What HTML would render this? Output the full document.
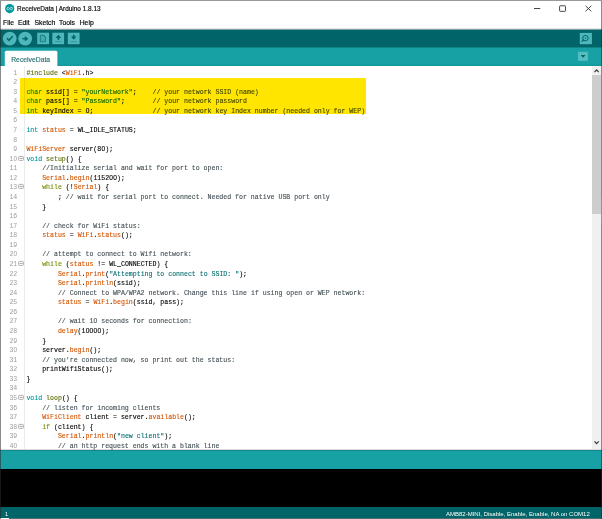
<!DOCTYPE html>
<html><head><meta charset="utf-8">
<style>
*{margin:0;padding:0;box-sizing:border-box}
html,body{width:602px;height:519px;overflow:hidden;background:#fff}
body{position:relative;font-family:"Liberation Sans",sans-serif}
.a{position:absolute}
#title{left:17px;top:5px;font-size:6.45px;color:#000;white-space:nowrap;-webkit-text-stroke:0.15px #000}
.menu{top:19.3px;font-size:6.8px;color:#000;white-space:nowrap;-webkit-text-stroke:0.15px #000}
#tabt{left:11.2px;top:56.1px;font-size:6.8px;color:#2a7072;white-space:nowrap;-webkit-text-stroke:0.15px #2a7072}
.l{left:0;width:592px;height:9.556px;font-family:"Liberation Mono",monospace;font-size:6.57px;line-height:9.556px;color:#000;white-space:pre}
.ln{position:absolute;left:0.3px;top:0;width:17px;text-align:right;color:#9c9c9c}
.cd{position:absolute;left:26.4px;top:0;-webkit-text-stroke:0.12px currentColor}
s{text-decoration:none;font-family:"Liberation Sans",sans-serif;display:inline-block;width:3.954px;text-align:center;line-height:0}
i{font-style:normal;-webkit-text-stroke:0.12px currentColor}
.pp{color:#5E6D03}.fn{color:#D35400}.dt{color:#00979C}.st{color:#5E6D03}.rw{color:#728E00}.str{color:#0a6f73}.cm{color:#434F54}
#hl{left:20.2px;top:77.6px;width:345.8px;height:36.2px;background:#FFE500;mix-blend-mode:multiply}
#st1{left:5px;top:510.5px;font-size:5.5px;color:#fff}
#st2{left:446px;top:510.6px;font-size:6px;color:#fff;white-space:nowrap}
</style></head><body>

<svg class="a" style="left:0;top:0" width="602" height="519" viewBox="0 0 602 519">
<rect x="0" y="28" width="602" height="1" fill="#e9e5e5"/>
<rect x="0" y="29" width="602" height="1" fill="#7aa4a6"/>
<rect x="0" y="30" width="602" height="17" fill="#006468"/>
<rect x="0" y="47" width="602" height="19" fill="#17A1A5"/>
<rect x="0" y="47" width="602" height="1" fill="#0c8387"/>
<rect x="0" y="64.5" width="602" height="1.5" fill="#12999d"/>
<rect x="57.4" y="51.5" width="1" height="14.5" fill="#12979b"/>
<path d="M4.8 66V52.3Q4.8 50.8 6.3 50.8H55.9Q57.4 50.8 57.4 52.3V66Z" fill="#fff"/>
<rect x="1" y="66" width="591" height="383" fill="#fff"/>
<rect x="24" y="66" width="1" height="383" fill="#ebebeb"/>
<rect x="18.6" y="156.40" width="4.8" height="4.0" rx="0.8" fill="#fff" stroke="#9c9c9c" stroke-width="0.8"/><path d="M19.7 158.40H22.6" stroke="#8f8f8f" stroke-width="0.8"/><rect x="18.6" y="184.40" width="4.8" height="4.0" rx="0.8" fill="#fff" stroke="#9c9c9c" stroke-width="0.8"/><path d="M19.7 186.40H22.6" stroke="#8f8f8f" stroke-width="0.8"/><rect x="18.6" y="261.40" width="4.8" height="4.0" rx="0.8" fill="#fff" stroke="#9c9c9c" stroke-width="0.8"/><path d="M19.7 263.40H22.6" stroke="#8f8f8f" stroke-width="0.8"/><rect x="18.6" y="395.40" width="4.8" height="4.0" rx="0.8" fill="#fff" stroke="#9c9c9c" stroke-width="0.8"/><path d="M19.7 397.40H22.6" stroke="#8f8f8f" stroke-width="0.8"/><rect x="18.6" y="424.40" width="4.8" height="4.0" rx="0.8" fill="#fff" stroke="#9c9c9c" stroke-width="0.8"/><path d="M19.7 426.40H22.6" stroke="#8f8f8f" stroke-width="0.8"/>
<rect x="592" y="66" width="9" height="383" fill="#f0f0f0"/>
<rect x="592" y="75" width="9" height="139" fill="#cdcdcd"/>
<path d="M594.5 72.1L596.6 69.9L598.7 72.1" fill="none" stroke="#383838" stroke-width="1.2"/>
<path d="M594.5 441.4L596.6 443.6L598.7 441.4" fill="none" stroke="#383838" stroke-width="1.2"/>
<rect x="0" y="449" width="602" height="1" fill="#e0d9d9"/>
<rect x="0" y="450" width="602" height="19" fill="#17A1A5"/>
<rect x="0" y="450" width="602" height="1" fill="#0e8a8e"/>
<rect x="0" y="469" width="602" height="38" fill="#000"/>
<rect x="0" y="507" width="602" height="11" fill="#006468"/>
<rect x="9" y="518" width="593" height="1" fill="#4a7070"/>
<!-- toolbar icons -->
<circle cx="9.7" cy="38.6" r="6.9" fill="#4DB7BB"/>
<circle cx="25.2" cy="38.6" r="6.9" fill="#4DB7BB"/>
<path d="M7 38.3L9 40.3L12.6 36.2" fill="none" stroke="#006468" stroke-width="1.5"/>
<path d="M22.4 38.7H25.8" stroke="#006468" stroke-width="1.3"/>
<path d="M25 36.5L28 38.7L25 40.9Z" fill="#006468" stroke="#006468" stroke-width="0.5" stroke-linejoin="round"/>
<rect x="37.2" y="32.7" width="11.9" height="11.5" fill="#4DB7BB"/>
<rect x="52.3" y="32.7" width="11.8" height="11.5" fill="#4DB7BB"/>
<rect x="67.8" y="32.7" width="11.8" height="11.5" fill="#4DB7BB"/>
<path d="M40.3 35.3H43.6L45.5 37.2V41.7H40.3Z" fill="#45aeb2" stroke="#0a6d71" stroke-width="0.7"/>
<path d="M43.4 35.3L45.5 37.4" stroke="#006468" stroke-width="0.9"/>
<path d="M41.2 37.6H44.6M41.2 38.8H44.6M41.2 40H44.6M41.2 41.1H44.6" stroke="#3c9da1" stroke-width="0.4"/>
<path d="M55.6 38.1L58.4 34.8L61.2 38.1Z" fill="#006468"/>
<path d="M58.4 37.5V39.9" stroke="#006468" stroke-width="1.6"/>
<path d="M55.2 41.6H61.8" stroke="#2f8f93" stroke-width="0.8"/>
<path d="M70.9 36.4L73.7 39.7L76.5 36.4Z" fill="#006468"/>
<path d="M73.7 34.7V37" stroke="#006468" stroke-width="1.6"/>
<path d="M70.3 41.8H76.9" stroke="#2f8f93" stroke-width="0.8"/>
<rect x="579.8" y="32.9" width="12.1" height="11.3" fill="#4DB7BB"/>
<circle cx="585.4" cy="38.1" r="2.7" fill="none" stroke="#006468" stroke-width="1"/>
<circle cx="585.4" cy="38.1" r="0.7" fill="#006468"/>
<path d="M583.4 40.1L582.1 41.4" stroke="#006468" stroke-width="1.3" stroke-linecap="round"/>
<path d="M588.3 38.2H590" stroke="#2f8f93" stroke-width="0.5"/>
<rect x="578" y="51.8" width="9.9" height="9" fill="#55BCC0"/>
<path d="M580.6 55H585.6L583.1 57.7Z" fill="#006468"/>
<!-- title icon & window controls -->
<circle cx="9.7" cy="8.6" r="4.6" fill="#00979C"/>
<path d="M9.7 8.6C8.9 7.6 8.4 7.4 7.9 7.4S7 7.9 7 8.6S7.4 9.8 7.9 9.8S8.9 9.6 9.7 8.6S10.5 7.4 11.5 7.4S12.4 7.9 12.4 8.6S12 9.8 11.5 9.8S10.5 9.6 9.7 8.6Z" fill="none" stroke="#e8f8f8" stroke-width="0.75"/>
<path d="M534 8.5H540.3" stroke="#333" stroke-width="0.9"/>
<rect x="559.6" y="5.8" width="5.9" height="5.5" rx="0.6" fill="none" stroke="#333" stroke-width="0.9"/>
<path d="M585.5 5.8L591.3 11.3M591.3 5.8L585.5 11.3" stroke="#333" stroke-width="0.9"/>
<!-- window border -->
<rect x="0" y="0" width="602" height="1" fill="#000" fill-opacity="0.4"/>
<rect x="0" y="1" width="1" height="518" fill="#282828" fill-opacity="0.54"/>
<rect x="601" y="1" width="1" height="518" fill="#282828" fill-opacity="0.54"/>
<rect x="601" y="198" width="1" height="26" fill="#a39565"/>
</svg>
<div class="a" id="title">ReceiveData | Arduino 1.8.13</div>
<div class="a menu" style="left:3px">File</div>
<div class="a menu" style="left:18px">Edit</div>
<div class="a menu" style="left:34.5px">Sketch</div>
<div class="a menu" style="left:59px">Tools</div>
<div class="a menu" style="left:79.7px">Help</div>
<div class="a" id="tabt">ReceiveData</div>
<div class="a l" style="top:68.72px"><span class="ln">1</span><span class="cd"><i class="pp">#include</i> &lt;<i class="fn">WiFi</i>.h&gt;</span></div>
<div class="a l" style="top:77.72px"><span class="ln">2</span><span class="cd"></span></div>
<div class="a l" style="top:87.72px"><span class="ln">3</span><span class="cd"><i class="dt">char</i> ssid[] = <i class="str">"yourNetwork"</i>;    <i class="cm">// your network SSID (name)</i></span></div>
<div class="a l" style="top:96.72px"><span class="ln">4</span><span class="cd"><i class="dt">char</i> pass[] = <i class="str">"Password"</i>;       <i class="cm">// your network password</i></span></div>
<div class="a l" style="top:106.72px"><span class="ln">5</span><span class="cd"><i class="dt">int</i> keyIndex = <s>0</s>;               <i class="cm">// your network key Index number (needed only for WEP)</i></span></div>
<div class="a l" style="top:115.72px"><span class="ln">6</span><span class="cd"></span></div>
<div class="a l" style="top:125.72px"><span class="ln">7</span><span class="cd"><i class="dt">int</i> <i class="fn">status</i> = WL_IDLE_STATUS;</span></div>
<div class="a l" style="top:135.72px"><span class="ln">8</span><span class="cd"></span></div>
<div class="a l" style="top:144.72px"><span class="ln">9</span><span class="cd"><i class="fn">WiFiServer</i> server(8<s>0</s>);</span></div>
<div class="a l" style="top:154.72px"><span class="ln">1<s>0</s></span><span class="cd"><i class="dt">void</i> <i class="st">setup</i>() {</span></div>
<div class="a l" style="top:163.72px"><span class="ln">11</span><span class="cd">    <i class="cm">//Initialize serial and wait for port to open:</i></span></div>
<div class="a l" style="top:173.72px"><span class="ln">12</span><span class="cd">    <i class="fn">Serial</i>.<i class="fn">begin</i>(1152<s>0</s><s>0</s>);</span></div>
<div class="a l" style="top:182.72px"><span class="ln">13</span><span class="cd">    <i class="rw">while</i> (!<i class="fn">Serial</i>) {</span></div>
<div class="a l" style="top:192.72px"><span class="ln">14</span><span class="cd">        ; <i class="cm">// wait for serial port to connect. Needed for native USB port only</i></span></div>
<div class="a l" style="top:202.72px"><span class="ln">15</span><span class="cd">    }</span></div>
<div class="a l" style="top:211.72px"><span class="ln">16</span><span class="cd"></span></div>
<div class="a l" style="top:221.72px"><span class="ln">17</span><span class="cd">    <i class="cm">// check for WiFi status:</i></span></div>
<div class="a l" style="top:230.72px"><span class="ln">18</span><span class="cd">    <i class="fn">status</i> = <i class="fn">WiFi</i>.<i class="fn">status</i>();</span></div>
<div class="a l" style="top:240.72px"><span class="ln">19</span><span class="cd"></span></div>
<div class="a l" style="top:249.72px"><span class="ln">2<s>0</s></span><span class="cd">    <i class="cm">// attempt to connect to Wifi network:</i></span></div>
<div class="a l" style="top:259.72px"><span class="ln">21</span><span class="cd">    <i class="rw">while</i> (<i class="fn">status</i> != WL_CONNECTED) {</span></div>
<div class="a l" style="top:269.72px"><span class="ln">22</span><span class="cd">        <i class="fn">Serial</i>.<i class="fn">print</i>(<i class="str">"Attempting to connect to SSID: "</i>);</span></div>
<div class="a l" style="top:278.72px"><span class="ln">23</span><span class="cd">        <i class="fn">Serial</i>.<i class="fn">println</i>(ssid);</span></div>
<div class="a l" style="top:288.72px"><span class="ln">24</span><span class="cd">        <i class="cm">// Connect to WPA/WPA2 network. Change this line if using open or WEP network:</i></span></div>
<div class="a l" style="top:297.72px"><span class="ln">25</span><span class="cd">        <i class="fn">status</i> = <i class="fn">WiFi</i>.<i class="fn">begin</i>(ssid, pass);</span></div>
<div class="a l" style="top:307.72px"><span class="ln">26</span><span class="cd"></span></div>
<div class="a l" style="top:316.72px"><span class="ln">27</span><span class="cd">        <i class="cm">// wait 1<s>0</s> seconds for connection:</i></span></div>
<div class="a l" style="top:326.72px"><span class="ln">28</span><span class="cd">        <i class="fn">delay</i>(1<s>0</s><s>0</s><s>0</s><s>0</s>);</span></div>
<div class="a l" style="top:336.72px"><span class="ln">29</span><span class="cd">    }</span></div>
<div class="a l" style="top:345.72px"><span class="ln">3<s>0</s></span><span class="cd">    server.<i class="fn">begin</i>();</span></div>
<div class="a l" style="top:355.72px"><span class="ln">31</span><span class="cd">    <i class="cm">// you're connected now, so print out the status:</i></span></div>
<div class="a l" style="top:364.72px"><span class="ln">32</span><span class="cd">    printWifiStatus();</span></div>
<div class="a l" style="top:374.72px"><span class="ln">33</span><span class="cd">}</span></div>
<div class="a l" style="top:383.72px"><span class="ln">34</span><span class="cd"></span></div>
<div class="a l" style="top:393.72px"><span class="ln">35</span><span class="cd"><i class="dt">void</i> <i class="st">loop</i>() {</span></div>
<div class="a l" style="top:403.72px"><span class="ln">36</span><span class="cd">    <i class="cm">// listen for incoming clients</i></span></div>
<div class="a l" style="top:412.72px"><span class="ln">37</span><span class="cd">    <i class="fn">WiFiClient</i> client = server.<i class="fn">available</i>();</span></div>
<div class="a l" style="top:422.72px"><span class="ln">38</span><span class="cd">    <i class="rw">if</i> (client) {</span></div>
<div class="a l" style="top:431.72px"><span class="ln">39</span><span class="cd">        <i class="fn">Serial</i>.<i class="fn">println</i>(<i class="str">"new client"</i>);</span></div>
<div class="a l" style="top:441.72px"><span class="ln">4<s>0</s></span><span class="cd">        <i class="cm">// an http request ends with a blank line</i></span></div>

<div class="a" id="hl"></div>
<div class="a" id="st1">1</div>
<div class="a" id="st2">AMB82-MINI, Disable, Enable, Enable, NA on COM12</div>
</body></html>
